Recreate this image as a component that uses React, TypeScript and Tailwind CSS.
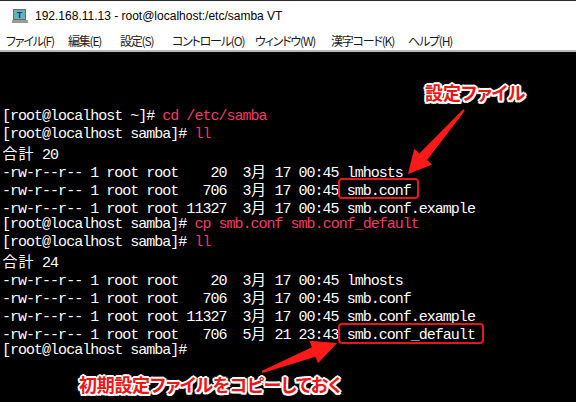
import React from "react";

type Seg = { t: string; pink?: boolean };

const lines: Seg[][] = [
	[{ t: "[root@localhost ~]# " }, { t: "cd /etc/samba", pink: true }],
	[{ t: "[root@localhost samba]# " }, { t: "ll", pink: true }],
	[{ t: "合計 20" }],
	[{ t: "-rw-r--r-- 1 root root    20  3月 17 00:45 lmhosts" }],
	[{ t: "-rw-r--r-- 1 root root   706  3月 17 00:45 smb.conf" }],
	[{ t: "-rw-r--r-- 1 root root 11327  3月 17 00:45 smb.conf.example" }],
	[{ t: "[root@localhost samba]# " }, { t: "cp smb.conf smb.conf_default", pink: true }],
	[{ t: "[root@localhost samba]# " }, { t: "ll", pink: true }],
	[{ t: "合計 24" }],
	[{ t: "-rw-r--r-- 1 root root    20  3月 17 00:45 lmhosts" }],
	[{ t: "-rw-r--r-- 1 root root   706  3月 17 00:45 smb.conf" }],
	[{ t: "-rw-r--r-- 1 root root 11327  3月 17 00:45 smb.conf.example" }],
	[{ t: "-rw-r--r-- 1 root root   706  5月 21 23:43 smb.conf_default" }],
	[{ t: "[root@localhost samba]#" }],
];

const menu = [
	{ label: "ファイル(F)", w: "w-[62px]" },
	{ label: "編集(E)", w: "w-[52px]" },
	{ label: "設定(S)", w: "w-[52px]" },
	{ label: "コントロール(O)", w: "w-[83px]" },
	{ label: "ウィンドウ(W)", w: "w-[76px]" },
	{ label: "漢字コード(K)", w: "w-[77px]" },
	{ label: "ヘルプ(H)", w: "w-[60px]" },
];

// full-width chars take two terminal cells
const renderText = (s: string) =>
	Array.from(s).map((ch, i) =>
		ch.charCodeAt(0) > 0x2e80 ? (
			<span
				key={i}
				className="inline-block w-[16px] text-center text-[15px] leading-[18px] tracking-normal font-['Noto_Sans_CJK_JP',sans-serif]"
			>
				{ch}
			</span>
		) : (
			ch
		)
	);

const outline =
	"[text-shadow:-2px_0_#fff,2px_0_#fff,0_-2px_#fff,0_2px_#fff,-1.5px_-1.5px_#fff,1.5px_1.5px_#fff,-1.5px_1.5px_#fff,1.5px_-1.5px_#fff,0_0_4px_#555]";

const App = () => {
	return (
		<div className="relative w-[576px] h-[402px] overflow-hidden bg-black flex flex-col">
			<div className="h-[31px] bg-white border-t border-[#2b2b2b] flex items-center gap-[7px] pl-[12px] pb-[1px]">
				<svg width="16" height="16" viewBox="0 0 16 16">
					<rect x="1.5" y="1.5" width="12" height="10" fill="#5fb8b0" stroke="#6a6a6a" />
					<text x="7.5" y="10" textAnchor="middle" fontSize="9" fontWeight="bold" fill="#1b2ca8" fontFamily="Liberation Sans, sans-serif">
						T
					</text>
					<rect x="0" y="12" width="16" height="3" fill="#9a9a9a" />
				</svg>
				<span className="text-[12px] text-black font-['Liberation_Sans',Arial,sans-serif]">
					192.168.11.13 - root@localhost:/etc/samba VT
				</span>
			</div>
			<div className="h-[21px] bg-white border-b-2 border-[#b9b9b9] flex items-center pl-[6px] text-[12px] tracking-[-1.2px] text-[#1a1a1a] font-['Noto_Sans_CJK_JP',sans-serif] [font-feature-settings:'palt']">
				{menu.map((m) => (
					<span key={m.label} className={`${m.w} shrink-0 whitespace-nowrap`}>
						{m.label}
					</span>
				))}
			</div>
			<div className="flex-1 pt-[56px] pl-[2px] text-white text-[15px] leading-[18px] tracking-[-1px] font-['Liberation_Mono',monospace] whitespace-pre">
				{lines.map((line, i) => (
					<div key={i} className="h-[18px] overflow-visible">
						{line.map((s, j) => (
							<span key={j} className={s.pink ? "text-[#f23a67]" : ""}>
								{renderText(s.t)}
							</span>
						))}
					</div>
				))}
			</div>

			{/* annotation boxes */}
			<div className="absolute left-[338px] top-[178px] w-[81px] h-[21px] border-2 border-[#e5171d] rounded-[4px]" />
			<div className="absolute left-[338px] top-[323px] w-[146px] h-[21px] border-2 border-[#e5171d] rounded-[4px]" />

			<svg className="absolute left-0 top-0" width="576" height="402" viewBox="0 0 576 402">
				<polygon
					points="463.2,109.3 419.4,153.4 414.2,148.8 408,174 432.2,164.6 427,160 464.8,110.7"
					fill="#ff1a1a"
				/>
				<polygon
					points="261.6,371 311.9,347.3 309.4,340.8 337,343 318,363.2 315.5,356.7 262.4,373"
					fill="#ff1a1a"
				/>
			</svg>

			<div
				className={`absolute left-[425px] top-[80px] text-[18px] leading-[24px] font-bold text-[#f01414] font-['Noto_Sans_CJK_JP',sans-serif] [font-feature-settings:'palt'] ${outline}`}
			>
				設定ファイル
			</div>
			<div
				className={`absolute left-[79px] top-[372px] text-[18px] leading-[24px] font-bold tracking-[-0.3px] text-[#f01414] font-['Noto_Sans_CJK_JP',sans-serif] [font-feature-settings:'palt'] ${outline}`}
			>
				初期設定ファイルをコピーしておく
			</div>
		</div>
	);
};

export default App;
